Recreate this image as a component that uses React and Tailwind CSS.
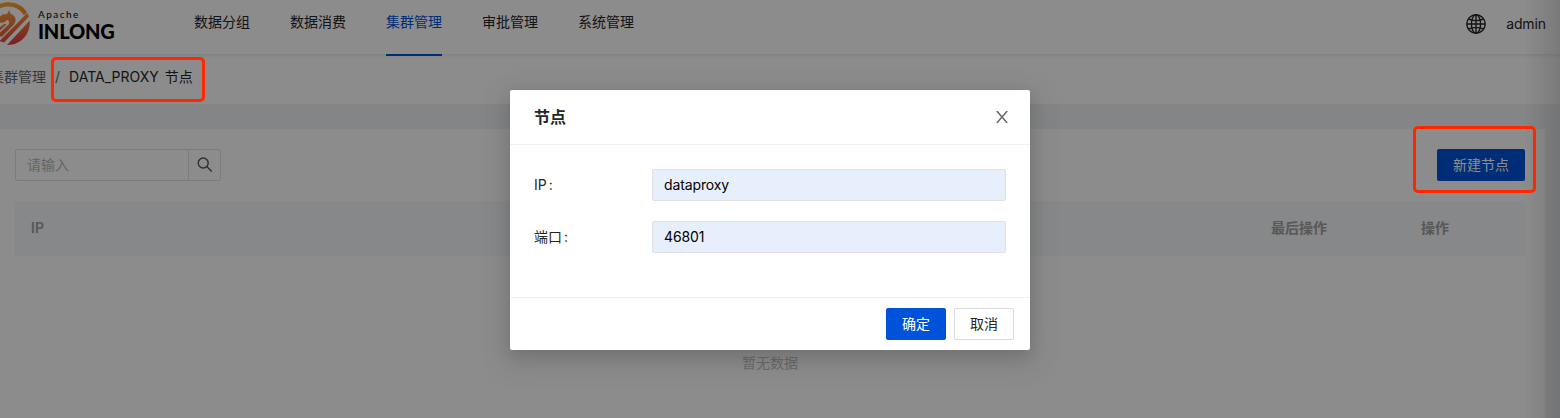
import React from "react";

const nav = ["数据分组", "数据消费", "集群管理", "审批管理", "系统管理"];

function Logo() {
  return (
    <svg className="h-[46px] w-[31px] shrink-0" viewBox="0 0 31 46" fill="none">
      <defs>
        <linearGradient id="logoFill" x1="8" y1="2" x2="16" y2="46" gradientUnits="userSpaceOnUse">
          <stop stopColor="#f9a72b" />
          <stop offset="0.5" stopColor="#f07a3c" />
          <stop offset="1" stopColor="#e0343f" />
        </linearGradient>
      </defs>
      <path d="M0 3.800C9 .3 21 2.500 27 12.300L24 15.200C19 7 9 4.500 0 8.200Z" fill="url(#logoFill)" />
      <path d="M0 16.500L2.500 14.500L7 14L9.300 10L10.300 13.500C15.500 15.500 17.500 20.500 13.500 25L1.500 37L0 36V32.500L8.500 24.500C9.800 22.800 9.200 20.500 7.500 20L3.500 22.500L0 22.800Z" fill="url(#logoFill)" />
      <path d="M0 30.500L6.500 24.300L4.500 23.800L0 27Z" fill="url(#logoFill)" />
      <path d="M27.300 13L29 16.500L4 42.500L0 41.300V40.500Z" fill="url(#logoFill)" />
      <path d="M29.800 20.500C30.500 34 21 45.200 7 45Z" fill="url(#logoFill)" />
    </svg>
  );
}

function Field({ label, value }) {
  return (
    <div className="flex h-8 items-center">
      <div className="w-[118px] text-[14px] text-[#262626]">{label}<span className="ml-[2px]">:</span></div>
      <div className="flex h-8 w-[354px] items-center rounded-[2px] border border-[#dfe1e6] bg-[#e8effc] px-[11px] text-[14px] tracking-[-0.12px] text-black">{value}</div>
    </div>
  );
}

export default function App() {
  return (
    <div className="relative flex h-[418px] w-[1560px] flex-col overflow-hidden bg-[#eff2f5] font-['Inter','Noto_Sans_CJK_SC',sans-serif] text-[14px] leading-[22px] text-[#262626]">
      <header className="z-10 flex h-[54px] shrink-0 bg-white shadow-[0_1px_4px_rgba(0,21,41,0.12)]">
        <div className="flex w-[194px]">
          <Logo />
          <div className="ml-[7px] pt-[8px] font-['Lato','Inter',sans-serif] text-black">
            <div className="text-[10px] leading-[12px] tracking-[1.45px]">Apache</div>
            <div className="text-[20px] leading-[22px] font-black tracking-[-0.2px]">INLONG</div>
          </div>
        </div>
        <nav className="flex gap-10">
          {nav.map((n, i) => (
            <div key={n} className={i === 2 ? "h-[56px] border-b-2 border-[#0052d9] pt-[11px] text-[#0052d9]" : "h-[56px] pt-[11px]"}>{n}</div>
          ))}
        </nav>
        <div className="ml-auto flex h-12 items-center pr-[14px]">
          <svg className="mr-5 size-5" viewBox="0 0 20 20" fill="none" stroke="#262626" strokeWidth="1.4">
            <circle cx="10" cy="10" r="9.200" />
            <ellipse cx="10" cy="10" rx="4.600" ry="9.200" />
            <path d="M10 .8V19.200M.8 10H19.200M2.400 5C7 7 13 7 17.600 5M2.400 15C7 13 13 13 17.600 15" />
          </svg>
          <span className="tracking-[-0.1px]">admin</span>
        </div>
      </header>
      <div className="h-[50px] shrink-0 bg-white pt-[12px]">
        <div className="ml-[-10px] flex whitespace-nowrap">
          <span className="text-[#666]">集群管理</span>
          <span className="mx-[9px] text-[#666]">/</span>
          <span className="[word-spacing:2px]">DATA_PROXY 节点</span>
        </div>
      </div>
      <main className="mt-[25px] mr-[15px] flex grow flex-col bg-white px-[15px] pt-5 pr-5">
        <div className="flex h-8 items-center justify-between">
          <div className="flex h-8 w-[206px] rounded-[2px] border border-[#e2e2e2]">
            <div className="flex grow items-center pl-[11px] text-[#b8b8b8]">请输入</div>
            <div className="flex w-8 items-center justify-center border-l border-[#e2e2e2]">
              <svg className="size-4" viewBox="0 0 16 16" fill="none" stroke="#555" strokeWidth="1.400">
                <circle cx="6.200" cy="6" r="5" />
                <path d="M9.800 9.600L14.700 14.500" />
              </svg>
            </div>
          </div>
          <div className="flex h-8 w-[88px] items-center justify-center rounded-[2px] bg-[#0052d9] text-white">新建节点</div>
        </div>
        <div className="mt-5 flex h-[55px] items-center bg-[#f5f7fa] pb-[2px] pl-4 font-semibold text-[#a0a0a0]">
          <span className="w-[1240px]">IP</span>
          <span className="w-[150px]">最后操作</span>
          <span>操作</span>
        </div>
        <div className="mt-[96px] text-center text-[#bfbfbf]">暂无数据</div>
      </main>

      <div className="absolute inset-y-0 right-0 z-20 w-9 bg-linear-to-r from-transparent to-black/13" />
      <div className="absolute inset-0 z-20 bg-black/45" />

      <section className="absolute top-[90px] left-[510px] z-30 flex h-[260px] w-[520px] flex-col rounded-[2px] bg-white shadow-[0_6px_16px_rgba(0,0,0,0.12),0_9px_28px_8px_rgba(0,0,0,0.08)]">
        <div className="flex h-[55px] items-center justify-between border-b border-[#f0f0f0] pr-[22px] pl-6">
          <h2 className="text-[16px] font-semibold">节点</h2>
          <svg className="size-3" viewBox="0 0 12 12" fill="none" stroke="#666" strokeWidth="1.500">
            <path d="M.8 0L11.200 12M11.200 0L.8 12" />
          </svg>
        </div>
        <div className="flex grow flex-col gap-5 px-6 pt-6">
          <Field label="IP" value="dataproxy" />
          <Field label="端口" value="46801" />
        </div>
        <div className="flex h-[53px] items-center justify-end gap-2 border-t border-[#f0f0f0] pr-4">
          <div className="flex h-8 w-[60px] items-center justify-center rounded-[2px] bg-[#0052d9] text-white">确定</div>
          <div className="flex h-8 w-[60px] items-center justify-center rounded-[2px] border border-[#dcdcdc]">取消</div>
        </div>
      </section>

      <div className="absolute top-[57px] left-[51px] z-30 h-[45px] w-[154px] rounded-[5px] border-[3px] border-[#ff2600]" />
      <div className="absolute top-[126px] left-[1413px] z-30 h-[67px] w-[123px] rounded-[5px] border-[3px] border-[#ff2600]" />
    </div>
  );
}
